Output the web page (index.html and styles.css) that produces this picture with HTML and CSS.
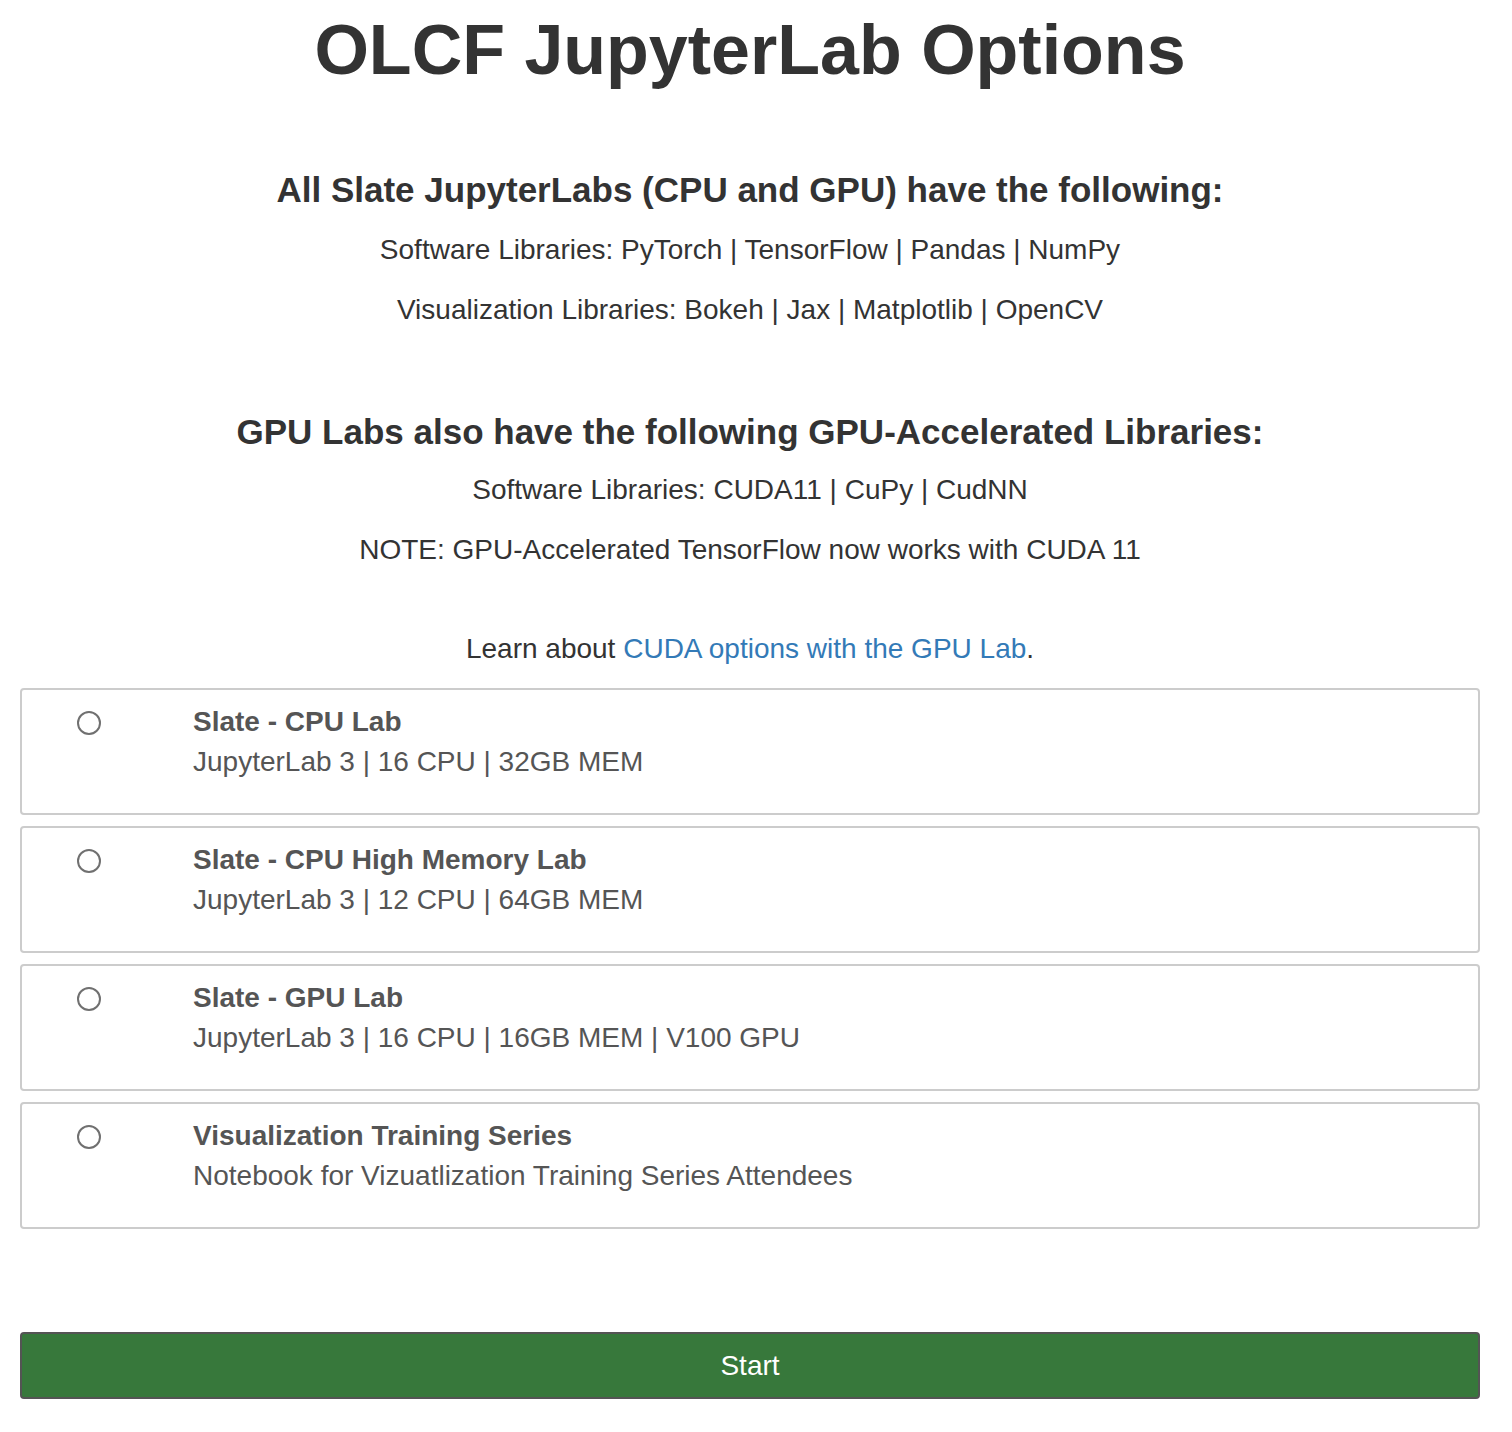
FILE: index.html
```html
<!DOCTYPE html>
<html lang="en">
<head>
<meta charset="utf-8">
<title>OLCF JupyterLab Options</title>
<link rel="stylesheet" href="styles.css">
</head>
<body>
<div class="page">
  <h1 class="title">OLCF JupyterLab Options</h1>

  <h3 class="heading heading-first">All Slate JupyterLabs (CPU and GPU) have the following:</h3>
  <p class="line line-a">Software Libraries: PyTorch | TensorFlow | Pandas | NumPy</p>
  <p class="line line-b">Visualization Libraries: Bokeh | Jax | Matplotlib | OpenCV</p>

  <h3 class="heading heading-second">GPU Labs also have the following GPU-Accelerated Libraries:</h3>
  <p class="line line-c">Software Libraries: CUDA11 | CuPy | CudNN</p>
  <p class="line line-b">NOTE: GPU-Accelerated TensorFlow now works with CUDA 11</p>

  <p class="line line-learn">Learn about <a class="link" href="#">CUDA options with the GPU Lab</a>.</p>

  <form class="options">
    <label class="option">
      <span class="radio-cell"><input class="radio" type="radio" name="profile"></span>
      <span class="option-text">
        <span class="option-title">Slate - CPU Lab</span>
        <span class="option-desc">JupyterLab 3 | 16 CPU | 32GB MEM</span>
      </span>
    </label>
    <label class="option">
      <span class="radio-cell"><input class="radio" type="radio" name="profile"></span>
      <span class="option-text">
        <span class="option-title">Slate - CPU High Memory Lab</span>
        <span class="option-desc">JupyterLab 3 | 12 CPU | 64GB MEM</span>
      </span>
    </label>
    <label class="option">
      <span class="radio-cell"><input class="radio" type="radio" name="profile"></span>
      <span class="option-text">
        <span class="option-title">Slate - GPU Lab</span>
        <span class="option-desc">JupyterLab 3 | 16 CPU | 16GB MEM | V100 GPU</span>
      </span>
    </label>
    <label class="option">
      <span class="radio-cell"><input class="radio" type="radio" name="profile"></span>
      <span class="option-text">
        <span class="option-title">Visualization Training Series</span>
        <span class="option-desc">Notebook for Vizuatlization Training Series Attendees</span>
      </span>
    </label>

    <button class="start" type="button">Start</button>
  </form>
</div>
</body>
</html>
```

FILE: styles.css
```css
html, body {
  margin: 0;
  padding: 0;
  background: #ffffff;
}

body {
  font-family: "Liberation Sans", Arial, Helvetica, sans-serif;
  color: #333333;
}

.page {
  width: 1460px;
  margin-left: 20px;
  padding-bottom: 33px;
}

.title {
  margin: 0;
  padding-top: 8px;
  font-size: 70px;
  line-height: 84px;
  font-weight: bold;
  text-align: center;
  color: #333333;
}

.heading {
  margin: 0;
  font-size: 35px;
  line-height: 40px;
  font-weight: bold;
  text-align: center;
  color: #333333;
}

.heading-first {
  margin-top: 78px;
}

.heading-second {
  margin-top: 84px;
}

.line {
  margin: 0;
  font-size: 28px;
  line-height: 36px;
  text-align: center;
}

.line-a {
  margin-top: 22px;
}

.line-b {
  margin-top: 24px;
}

.line-c {
  margin-top: 20px;
}

.line-learn {
  margin-top: 63px;
}

.link {
  color: #337ab7;
  text-decoration: none;
}

.options {
  margin-top: 21px;
  display: flex;
  flex-direction: column;
  gap: 11px;
}

.option {
  display: flex;
  height: 127px;
  box-sizing: border-box;
  border: 2px solid #cccccc;
  border-radius: 4px;
  padding-top: 12px;
  color: #555555;
  cursor: pointer;
}

.radio-cell {
  width: 171px;
  display: flex;
  justify-content: flex-start;
  padding-left: 55px;
  box-sizing: border-box;
  padding-top: 9px;
}

.radio {
  appearance: none;
  -webkit-appearance: none;
  margin: 0;
  width: 24px;
  height: 24px;
  border: 2px solid #707070;
  border-radius: 50%;
  background: #ffffff;
  box-sizing: border-box;
}

.option-text {
  display: flex;
  flex-direction: column;
}

.option-title {
  font-size: 28px;
  line-height: 40px;
  font-weight: bold;
}

.option-desc {
  font-size: 28px;
  line-height: 40px;
}

.start {
  margin-top: 92px;
  height: 67px;
  width: 100%;
  box-sizing: border-box;
  border: 2px solid #545454;
  border-radius: 4px;
  background: #37783b;
  color: #ffffff;
  font-family: "Liberation Sans", Arial, Helvetica, sans-serif;
  font-size: 28px;
  cursor: pointer;
}
```
